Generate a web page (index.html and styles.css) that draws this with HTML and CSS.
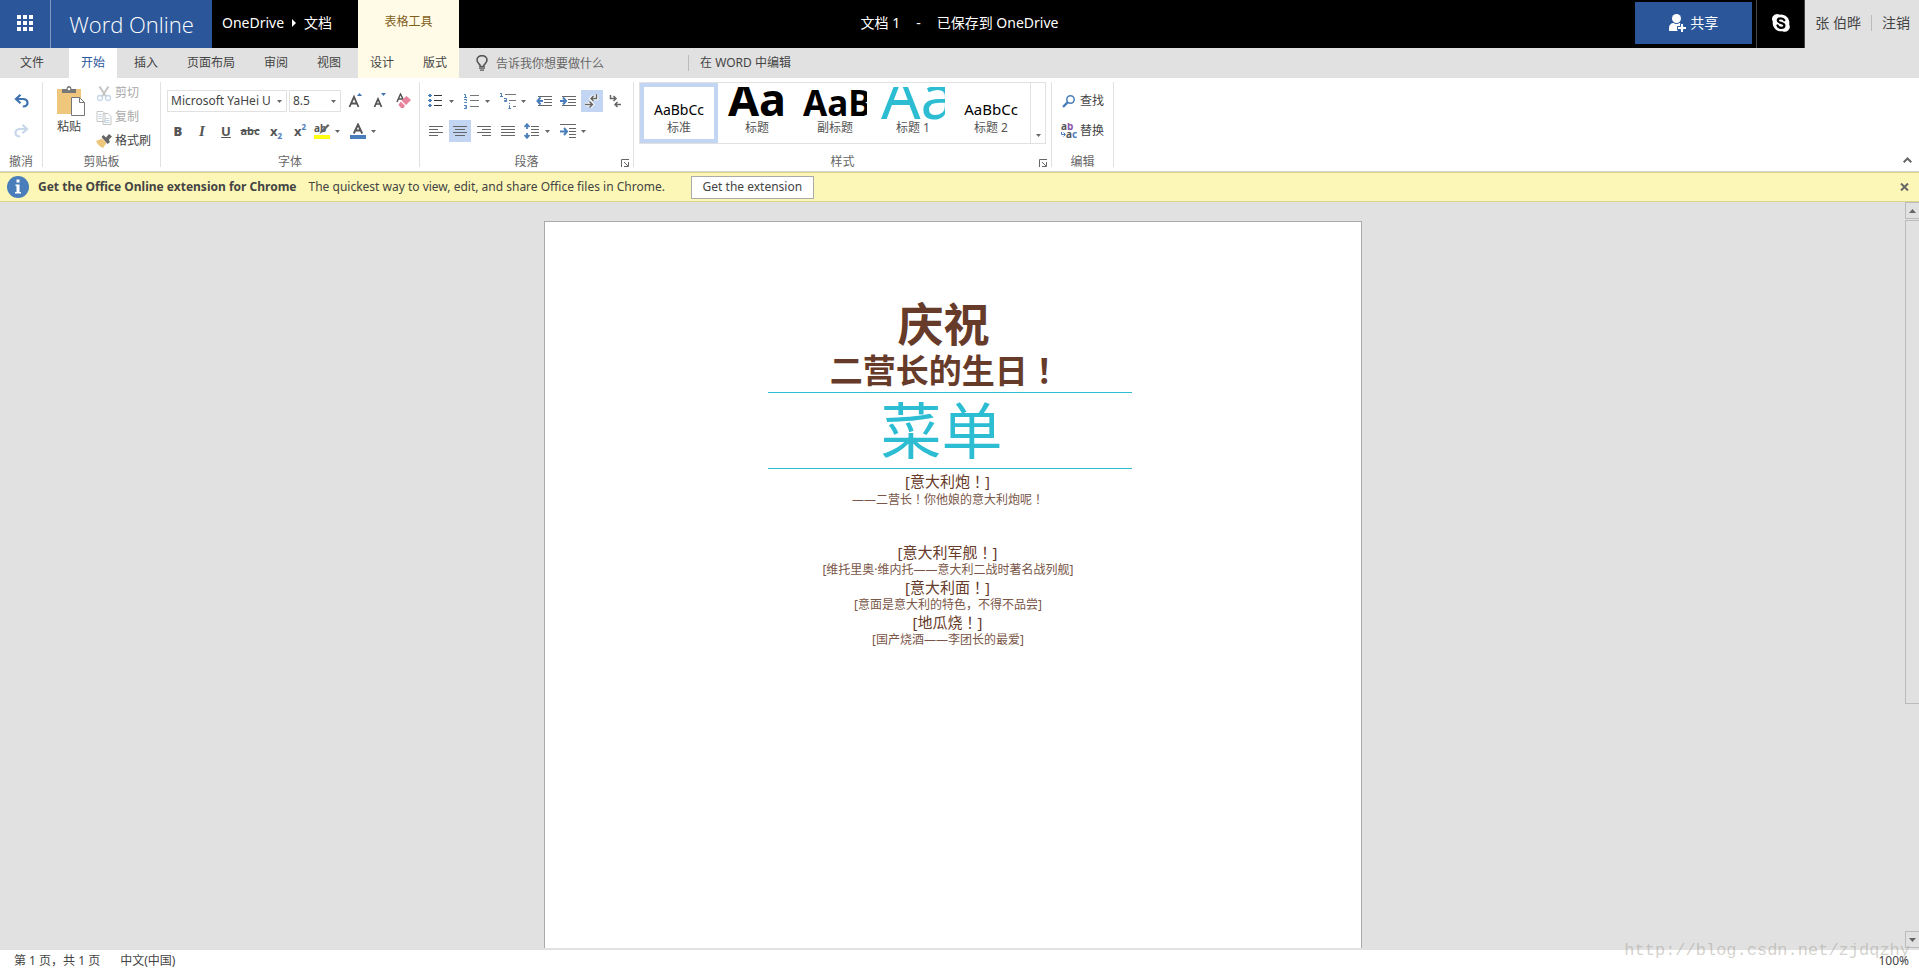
FILE: index.html
```html
<!DOCTYPE html>
<html lang="zh-CN">
<head>
<meta charset="utf-8">
<title>文档 1 - Word Online</title>
<link rel="stylesheet" href="styles.css">
</head>
<body>
<header class="topbar">
  <div class="topbar-left">
    <button class="launcher" aria-label="应用启动器">
      <svg width="16" height="16" viewBox="0 0 16 16" fill="#fff"><path d="M0 0h4v4H0zM6 0h4v4H6zM12 0h4v4h-4zM0 6h4v4H0zM6 6h4v4H6zM12 6h4v4h-4zM0 12h4v4H0zM6 12h4v4H6zM12 12h4v4h-4z"/></svg>
    </button>
    <a class="brand" href="#">Word Online</a>
    <nav class="crumbs">
      <a href="#">OneDrive</a>
      <svg width="4" height="8" viewBox="0 0 4 8" fill="#fff"><path d="M0 0l4 4-4 4z"/></svg>
      <a href="#">文档</a>
    </nav>
    <div class="context-title">表格工具</div>
  </div>
  <div class="doc-title"><span>文档 1</span><span>-</span><span>已保存到 OneDrive</span></div>
  <div class="topbar-right">
    <button class="share">
      <svg width="17" height="18" viewBox="0 0 17 18"><g fill="#fff"><circle cx="7.500" cy="4.500" r="4.500"/><path d="M0 17v-3c0-3 2-5 4.500-5 1.500 1.200 4.500 1.200 6 0 .8.100 1.400.400 2 .9V12H11v2H8.500v3z"/></g><path fill="#fff" stroke="#2b579a" d="M11.500 9.500h3v3H17.500v3h-3v3h-3v-3h-3v-3h3z"/></svg>
      共享
    </button>
    <button class="skype" aria-label="Skype">
      <svg width="18" height="18" viewBox="0 0 18 18"><path fill="#fff" d="M5 0c1 0 1.900.3 2.600.7A8.300 8.300 0 0 1 17.200 10.500 5 5 0 0 1 10.500 17.200 8.300 8.300 0 0 1 .8 7.600 5 5 0 0 1 5 0z"/><path fill="none" stroke="#000" stroke-width="2.200" stroke-linecap="round" d="M12.300 6.200C11.500 4.500 9.800 4.300 8.800 4.300c-1.800 0-3 .9-3 2.200 0 3 6.600 1.700 6.600 4.900 0 1.500-1.500 2.400-3.300 2.400-1.900 0-3-.8-3.600-2.300"/></svg>
    </button>
    <div class="account"><a href="#">张 伯晔</a><a class="signout" href="#">注销</a></div>
  </div>
</header>

<nav class="tabs">
  <button class="tab tab-file">文件</button>
  <button class="tab tab-active">开始</button>
  <button class="tab">插入</button>
  <button class="tab">页面布局</button>
  <button class="tab">审阅</button>
  <button class="tab">视图</button>
  <div class="context-tabs"><button class="tab">设计</button><button class="tab">版式</button></div>
  <label class="tellme">
    <svg width="12" height="16" viewBox="0 0 12 16"><path fill="none" stroke="#555" stroke-width="1.600" d="M4 11.500V10C2.500 8.500 1 7.500 1 5a5 4.400 0 0 1 10 0c0 2.500-1.500 3.500-3 5v1.500z"/><path fill="#555" d="M3 12.500h6v1.200H3zM4 14.500h4v1.200H4z"/></svg>
    <input type="text" placeholder="告诉我你想要做什么" aria-label="告诉我你想要做什么">
  </label>
  <a class="open-word" href="#">在 WORD 中编辑</a>
</nav>

<section class="ribbon">
  <div class="group g-undo">
    <div class="body">
      <button class="tool" aria-label="撤消"><svg width="15" height="14" viewBox="0 0 15 14"><path fill="none" stroke="#3f72ad" stroke-width="2.200" d="M2 5h6.500c3 0 5 1.500 5 3.800 0 2.400-2 3.700-4.700 3.700"/><path fill="none" stroke="#3f72ad" stroke-width="2.200" d="M6.500.8L2 5l4.500 4.200"/></svg></button>
      <button class="tool" aria-label="恢复"><svg width="15" height="14" viewBox="0 0 15 14"><path fill="none" stroke="#c8d8ea" stroke-width="2.200" d="M13 5H6.500c-3 0-5 1.500-5 3.800 0 2.400 2 3.700 4.700 3.700M8.500.8L13 5 8.500 9.200"/></svg></button>
    </div>
    <div class="caption">撤消</div>
  </div>

  <div class="group g-clip">
    <div class="clip-body">
      <button class="paste">
        <svg width="28" height="30" viewBox="0 0 28 30"><path fill="#efc77c" d="M0 3h24v25H0z"/><path fill="#777" d="M5 3h4.500c0-4 5-4 5 0H19v4H5z"/><circle cx="12" cy="3" r="1.300" fill="#fff"/><path fill="#fff" stroke="#777" d="M14.500 11.500h8l5 5v13h-13z"/><path fill="none" stroke="#777" d="M22.500 11.500v5h5"/></svg>
        粘贴
      </button>
      <div class="clip-list">
        <button class="clip off"><svg width="15" height="15" viewBox="0 0 15 15"><path fill="none" stroke="#c6c6c6" stroke-width="2" d="M3 .5l6.500 10M12 .5l-6.500 10"/><circle cx="3.500" cy="12" r="2.500" fill="none" stroke="#c5d6ea" stroke-width="1.300"/><circle cx="11.500" cy="12" r="2.500" fill="none" stroke="#c5d6ea" stroke-width="1.300"/></svg>剪切</button>
        <button class="clip off"><svg width="15" height="15" viewBox="0 0 15 15"><path fill="#fff" stroke="#c6c6c6" d="M.5 1.500h6l2 2v8h-8zM6.500 3.500h5l3 3v8h-8z"/><path stroke="#c5d6ea" d="M2 4.500h3M2 6.500h3M2 8.500h3M8 8.500h5M8 10.500h5M8 12.500h5"/></svg>复制</button>
        <button class="clip"><svg width="16" height="14" viewBox="0 0 16 14"><path fill="#efc77c" d="M0 7l6-2.500L10.500 9 7 14C4 13 1 10 0 7z"/><path fill="#666" d="M5.500 3l2-2 2.500 2.500L13 0l3 2.500-3.200 3.300L14 8l-2.500 2z"/></svg>格式刷</button>
      </div>
    </div>
    <div class="caption">剪贴板</div>
  </div>

  <div class="group g-font">
    <div class="body">
      <div class="row">
        <span class="combo combo-font"><select aria-label="字体"><option>Microsoft YaHei UI</option></select><svg class="arrow" width="5" height="3" viewBox="0 0 5 3"><path d="M0 0h5L2.500 3z"/></svg></span>
        <span class="combo combo-size"><select aria-label="字号"><option>8.5</option></select><svg class="arrow" width="5" height="3" viewBox="0 0 5 3"><path d="M0 0h5L2.500 3z"/></svg></span>
        <button class="tool" aria-label="增大字号"><svg width="14" height="16" viewBox="0 0 14 16"><path fill="none" stroke="#555" stroke-width="1.800" d="M1.500 14L6 3.800 10.500 14M3 10.500h6"/><path fill="#3f72ad" d="M9 3l2.500-3L14 3z"/></svg></button>
        <button class="tool" aria-label="减小字号"><svg width="14" height="16" viewBox="0 0 14 16"><path fill="none" stroke="#555" stroke-width="1.700" d="M2.500 14L6 5.800 9.500 14M4 11h4"/><path fill="#3f72ad" d="M9 0h5l-2.500 3z"/></svg></button>
        <button class="tool" aria-label="清除格式"><svg width="15" height="16" viewBox="0 0 15 16"><path fill="none" stroke="#555" stroke-width="1.500" d="M1 9l3.500-8L8 8M2 6h5"/><path fill="#e8839b" d="M10.500 3L15 7l-5 5-4.500-4.500zM4.700 8.500L9 12.700 7.500 15 5 15 2.500 12z"/></svg></button>
      </div>
      <div class="row">
        <button class="tool letter"><b>B</b></button>
        <button class="tool letter"><em>I</em></button>
        <button class="tool letter"><u>U</u></button>
        <button class="tool strike"><s>abc</s></button>
        <button class="tool letter script" aria-label="下标">x<small class="sub">2</small></button>
        <button class="tool letter script" aria-label="上标">x<small class="sup">2</small></button>
        <button class="tool split" aria-label="突出显示"><svg width="16" height="16" viewBox="0 0 16 16"><path fill="#ff1" d="M0 12h16v4H0z"/><text class="mark-ab" x="0" y="9">ab</text><path fill="#666" d="M14 1l1.500 1.500L9 9l-3.500 2L7 7.500z"/></svg><svg class="arrow" width="5" height="3" viewBox="0 0 5 3"><path d="M0 0h5L2.500 3z"/></svg></button>
        <button class="tool split" aria-label="字体颜色"><svg width="16" height="16" viewBox="0 0 16 16"><path fill="#4a7ebb" d="M0 12h16v4H0z"/><path fill="none" stroke="#555" stroke-width="1.900" d="M3.800 10.500L8 1.500l4.200 9M5 7.500h6"/></svg><svg class="arrow" width="5" height="3" viewBox="0 0 5 3"><path d="M0 0h5L2.500 3z"/></svg></button>
      </div>
    </div>
    <div class="caption">字体</div>
  </div>

  <div class="group g-para">
    <div class="body">
      <div class="row">
        <button class="tool split" aria-label="项目符号"><svg width="16" height="14" viewBox="0 0 16 14"><path fill="#4a7ebb" d="M1 0h2v1h1v1H3v1H1V2H0V1h1zM1 5h2v1h1v1H3v1H1V7H0V6h1zM1 10h2v1h1v1H3v1H1v-1H0v-1h1z"/><path stroke="#333" d="M6 1.500h8M6 6.500h8M6 11.500h8"/></svg><svg class="arrow" width="5" height="3" viewBox="0 0 5 3"><path d="M0 0h5L2.500 3z"/></svg></button>
        <button class="tool split" aria-label="编号"><svg width="16" height="16" viewBox="0 0 16 16"><path fill="none" stroke="#4a7ebb" d="M0 1.500h1.500V4M0 4.500h3M0 6.500h2.500V8M.5 9v.5H3M0 12.500h2.500v3H0M1 14h2"/><path stroke="#777" d="M6 2.500h9M6 7.500h9M6 13.500h9"/></svg><svg class="arrow" width="5" height="3" viewBox="0 0 5 3"><path d="M0 0h5L2.500 3z"/></svg></button>
        <button class="tool split" aria-label="多级列表"><svg width="16" height="16" viewBox="0 0 16 16"><path fill="none" stroke="#4a7ebb" d="M0 .5h1.500V3M0 3.500h3M4 5.500h2.500v3H4.500V7.500H6M9.500 10v1M9 12.500h.5V15M8.500 15.500h2.500"/><path stroke="#777" d="M5 1.500h11M9 7.500h7M13 13.500h3"/></svg><svg class="arrow" width="5" height="3" viewBox="0 0 5 3"><path d="M0 0h5L2.500 3z"/></svg></button>
        <button class="tool" aria-label="减少缩进"><svg width="16" height="13" viewBox="0 0 16 13"><path stroke="#666" d="M2 1.500h14M8 4.500h8M8 7.500h8M2 10.500h14"/><path fill="none" stroke="#4a7ebb" stroke-width="2" d="M4.500 2.500L1.500 6l3 3.500M1 6h6"/></svg></button>
        <button class="tool" aria-label="增加缩进"><svg width="16" height="13" viewBox="0 0 16 13"><path stroke="#666" d="M2 1.500h14M8 4.500h8M8 7.500h8M2 10.500h14"/><path fill="none" stroke="#4a7ebb" stroke-width="2" d="M3 2.500L6 6 3 9.500M0 6h6.500"/></svg></button>
        <button class="tool on" aria-label="从左到右"><svg width="14" height="14" viewBox="0 0 14 14"><path fill="none" stroke="#fff" stroke-width="3.500" d="M11.500 0v4.500H6M8.500 2L6 4.500 8.500 7M0 10.500h7M4.500 7.500l3 3-3 3"/><path fill="none" stroke="#666" stroke-width="1.500" d="M11.500 0v4.500H6M8.500 2L6 4.500 8.500 7M0 10.500h7M4.500 7.500l3 3-3 3"/></svg></button>
        <button class="tool" aria-label="从右到左"><svg width="14" height="14" viewBox="0 0 14 14"><path fill="none" stroke="#666" stroke-width="1.500" d="M1.500 1v3.500H7M4.500 2L7 4.500 4.500 7M12 10.500H6M8.500 8L6 10.500 8.500 13"/></svg></button>
      </div>
      <div class="row">
        <button class="tool" aria-label="左对齐"><svg width="14" height="12" viewBox="0 0 14 12"><path stroke="#666" d="M0 1.500h14M0 4.500h9M0 7.500h14M0 10.500h9"/></svg></button>
        <button class="tool on" aria-label="居中"><svg width="14" height="12" viewBox="0 0 14 12"><path stroke="#666" d="M0 1.500h14M2 4.500h10M0 7.500h14M2 10.500h10"/></svg></button>
        <button class="tool" aria-label="右对齐"><svg width="14" height="12" viewBox="0 0 14 12"><path stroke="#666" d="M0 1.500h14M5 4.500h9M0 7.500h14M5 10.500h9"/></svg></button>
        <button class="tool" aria-label="两端对齐"><svg width="14" height="12" viewBox="0 0 14 12"><path stroke="#666" d="M0 1.500h14M0 4.500h14M0 7.500h14M0 10.500h14"/></svg></button>
        <button class="tool split" aria-label="行距"><svg width="16" height="16" viewBox="0 0 16 16"><path fill="none" stroke="#4a7ebb" stroke-width="1.800" d="M3 1v5M.5 4L3 1.200 5.500 4M3 10v5M.5 12L3 14.800 5.500 12"/><path stroke="#666" d="M7 3.500h8M7 6.500h8M7 9.500h8M7 12.500h8"/></svg><svg class="arrow" width="5" height="3" viewBox="0 0 5 3"><path d="M0 0h5L2.500 3z"/></svg></button>
        <button class="tool split" aria-label="特殊缩进"><svg width="16" height="14" viewBox="0 0 16 14"><path stroke="#666" d="M0 .5h16M9 4.500h7M9 7.500h7M9 10.500h7M9 13.500h7"/><path fill="none" stroke="#4a7ebb" stroke-width="2" d="M4 4L7 7.500 4 11M0 7.500h7"/></svg><svg class="arrow" width="5" height="3" viewBox="0 0 5 3"><path d="M0 0h5L2.500 3z"/></svg></button>
      </div>
    </div>
    <div class="caption">段落</div>
    <button class="dialog" aria-label="段落设置"><svg width="8" height="8" viewBox="0 0 8 8"><path fill="none" stroke="#666" d="M.5 8V.5H8M3 3l4 4M7.500 3v4.500H3"/></svg></button>
  </div>

  <div class="group g-styles">
    <div class="gallery">
      <button class="style style-on"><span class="preview p-normal">AaBbCc</span>标准</button>
      <button class="style"><span class="preview p-title">Aa</span>标题</button>
      <button class="style"><span class="preview p-subtitle">AaB</span>副标题</button>
      <button class="style"><span class="preview p-h1">Aa</span>标题 1</button>
      <button class="style"><span class="preview p-h2">AaBbCc</span>标题 2</button>
      <button class="more" aria-label="更多样式"><svg class="arrow" width="5" height="3" viewBox="0 0 5 3"><path d="M0 0h5L2.500 3z"/></svg></button>
    </div>
    <div class="caption">样式</div>
    <button class="dialog" aria-label="样式设置"><svg width="8" height="8" viewBox="0 0 8 8"><path fill="none" stroke="#666" d="M.5 8V.5H8M3 3l4 4M7.500 3v4.500H3"/></svg></button>
  </div>

  <div class="group g-edit">
    <div class="body">
      <button class="edit-tool"><svg width="16" height="13" viewBox="0 0 16 13"><circle cx="9.500" cy="4.500" r="3.700" fill="none" stroke="#4a7ebb" stroke-width="1.500"/><path stroke="#4a7ebb" stroke-width="2.400" d="M6.800 7.200L2 12"/></svg>查找</button>
      <button class="edit-tool"><svg width="16" height="16" viewBox="0 0 16 16"><text class="rep" x="0" y="7">a<tspan fill="#8a55a8">b</tspan></text><text class="rep" x="5" y="15">a<tspan fill="#4a7ebb">c</tspan></text><path fill="none" stroke="#4a7ebb" d="M.5 9v2.500H4M2.500 9.500l2 2-2 2"/></svg>替换</button>
    </div>
    <div class="caption">编辑</div>
  </div>
  <button class="collapse" aria-label="折叠功能区"><svg width="9" height="6" viewBox="0 0 9 6"><path fill="none" stroke="#666" stroke-width="2" d="M.7 5.300L4.500 1.500l3.800 3.800"/></svg></button>
</section>

<aside class="notice">
  <svg width="22" height="22" viewBox="0 0 22 22"><circle cx="11" cy="11" r="11" fill="#4a7ebb"/><path fill="#fff" d="M9.500 3.500h3v3h-3zM8.500 8.500h4V16H14v1.500H8V16h1.500v-6h-1z"/></svg>
  <b>Get the Office Online extension for Chrome</b>
  <span>The quickest way to view, edit, and share Office files in Chrome.</span>
  <button class="get">Get the extension</button>
  <button class="close" aria-label="关闭"><svg width="9" height="8" viewBox="0 0 9 8"><path fill="none" stroke="#666" stroke-width="2" d="M1 .5l7 7M8 .5l-7 7"/></svg></button>
</aside>

<main class="workspace">
  <div class="canvas">
    <article class="page">
      <h1 class="celebrate">庆祝&nbsp;</h1>
      <h2 class="birthday">二营长的生日<span class="mid" lang="zh-TW">！</span>&nbsp;</h2>
      <h2 class="menu-title">菜单&nbsp;</h2>
      <div class="menu">
        <h3>[意大利炮<span class="mid" lang="zh-TW">！</span>]&nbsp;</h3>
        <p>——二营长<span class="mid" lang="zh-TW">！</span>你他娘的意大利炮呢<span class="mid" lang="zh-TW">！</span>&nbsp;</p>
        <h3 class="spaced">[意大利军舰<span class="mid" lang="zh-TW">！</span>]&nbsp;</h3>
        <p>[维托里奥·维内托——意大利二战时著名战列舰]&nbsp;</p>
        <h3>[意大利面<span class="mid" lang="zh-TW">！</span>]&nbsp;</h3>
        <p>[意面是意大利的特色，不得不品尝]&nbsp;</p>
        <h3>[地瓜烧<span class="mid" lang="zh-TW">！</span>]&nbsp;</h3>
        <p>[国产烧酒——李团长的最爱]&nbsp;</p>
      </div>
    </article>
  </div>
  <div class="scrollbar">
    <button class="scroll-btn" aria-label="向上"><svg class="arrow" width="7" height="4" viewBox="0 0 7 4"><path d="M0 4h7L3.500 0z"/></svg></button>
    <div class="track"><div class="thumb"></div></div>
    <button class="scroll-btn" aria-label="向下"><svg class="arrow" width="7" height="4" viewBox="0 0 7 4"><path d="M0 0h7L3.500 4z"/></svg></button>
  </div>
</main>

<footer class="status">
  <span>第 1 页，共 1 页</span><span>中文(中国)</span><span class="zoom">100%</span>
</footer>
<div class="watermark">http://blog.csdn.net/zjdqzhy</div>
</body>
</html>
```
FILE: styles.css
```css
* { box-sizing: border-box; }
html, body { height: 100%; }
body {
  margin: 0;
  display: flex;
  flex-direction: column;
  overflow: hidden;
  position: relative;
  background: #fff;
  color: #444;
  font: 12px/16px "Noto Sans", "Noto Sans CJK SC", sans-serif;
}
button, input, select { font: inherit; color: inherit; background: none; border: 0; padding: 0; margin: 0; border-radius: 0; }
a { color: inherit; text-decoration: none; }
h1, h2, h3, p { margin: 0; }
svg { flex: none; display: block; }
.arrow { fill: #666; }

.topbar {
  display: grid;
  grid-template-columns: 1fr auto 1fr;
  height: 48px;
  flex: none;
  background: #000;
  color: #fff;
  font-size: 14px;
}
.topbar-left, .topbar-right { display: flex; align-items: stretch; }
.topbar-right { justify-content: flex-end; }
.launcher { width: 51px; display: flex; align-items: center; justify-content: center; background: #2b579a; border-right: 1px solid #7f9ac2; padding-bottom: 2px; }
.brand { width: 161px; display: flex; align-items: center; justify-content: center; padding-bottom: 1px; background: #2b579a; font: 300 22px/30px "Open Sans", "Noto Sans", sans-serif; }
.crumbs { width: 146px; padding: 0 0 2px 10px; display: flex; align-items: center; gap: 8px; }
.context-title { width: 101px; display: flex; align-items: center; justify-content: center; padding-bottom: 5px; background: #fffbe6; color: #7f5f1a; font-size: 12px; }
.doc-title { display: flex; align-items: center; gap: 16px; padding-bottom: 2px; }
.share { width: 117px; margin: 2px 4px 4px 0; display: flex; align-items: center; justify-content: center; gap: 4px; background: #2b579a; }
.skype { width: 49px; display: flex; align-items: center; justify-content: center; padding-bottom: 2px; border: solid #444; border-width: 0 1px; }
.account { display: flex; align-items: center; padding: 0 9px 2px 10px; background: #e1e1e1; color: #444; }
.signout { margin-left: 10px; padding-left: 10px; border-left: 1px solid #bbb; }

.tabs { display: flex; height: 30px; flex: none; background: #e1e1e1; align-items: stretch; }
.tab { padding: 0 12px; margin-right: 5px; }
.tab-file { width: 64px; text-align: center; }
.tab-active { background: #fff; color: #2b579a; }
.context-tabs { display: flex; justify-content: space-between; width: 101px; background: #fffbe6; }
.context-tabs .tab { margin: 0; }
.tellme { display: flex; align-items: center; gap: 8px; margin-left: 17px; width: 212px; }
.tellme input { width: 180px; height: 24px; outline: 0; }
.tellme input::placeholder { color: #666; opacity: 1; }
.open-word { align-self: center; border-left: 1px solid #bbb; padding-left: 11px; }

.ribbon { display: flex; flex: none; height: 94px; padding: 4px 0; background: #fff; border-bottom: 1px solid #d5d5d5; }
.group { position: relative; display: flex; flex-direction: column; justify-content: space-between; border-right: 1px solid #e1e1e1; }
.caption { text-align: center; color: #666; line-height: 10px; }
.body { display: flex; flex-direction: column; gap: 8px; padding-top: 8px; }
.row { display: flex; gap: 2px; height: 22px; }
.tool { display: flex; align-items: center; justify-content: center; width: 22px; height: 22px; }
.tool.on { background: #c2d5f2; }
.split { width: 34px; justify-content: flex-start; gap: 5px; padding-left: 3px; }
.letter { font-weight: 700; font-size: 13px; color: #555; }
.letter em { font-family: "Liberation Serif", serif; font-size: 15px; }
.strike { font-weight: 700; font-size: 11px; color: #555; }
.letter small { color: #4a7ebb; font-size: 8px; line-height: 8px; }
.script { justify-content: flex-end; padding-right: 3px; }
.sub { padding-top: 10px; }
.sup { padding-bottom: 8px; }
.mark-ab { font: 700 10px "Noto Sans", sans-serif; fill: #555; }
.rep { font: 700 10px "Noto Sans", sans-serif; fill: #555; }

.g-undo { width: 43px; }
.g-undo .body { align-items: center; }
.g-clip { width: 118px; }
.clip-body { display: flex; gap: 11px; padding: 4px 0 0 14px; }
.paste { display: flex; flex-direction: column; align-items: flex-start; gap: 3px; align-self: flex-start; }
.clip-list { display: flex; flex-direction: column; gap: 8px; margin-top: -1px; }
.clip { display: flex; align-items: center; gap: 3px; height: 16px; }
.clip svg { width: 16px; }
.clip.off { color: #aaa; }
.g-font { width: 259px; padding-left: 6px; }
.g-font .caption { padding-right: 6px; }
.combo { position: relative; display: flex; border: 1px solid #e1e1e1; }
.combo select { appearance: none; width: 100%; padding: 0 16px 0 3px; outline: 0; color: #444; }
.combo .arrow { position: absolute; right: 4px; top: 9px; pointer-events: none; }
.combo-font { width: 120px; }
.combo-size { width: 52px; margin-right: 1px; }
.g-para { width: 214px; padding-left: 5px; }
.g-para .caption { padding-right: 5px; }
.dialog { position: absolute; right: 4px; bottom: 0; }
.g-styles { width: 418px; padding: 0 5px; }
.gallery { display: flex; border: 1px solid #e1e1e1; height: 62px; }
.style { width: 78px; display: flex; flex-direction: column; align-items: center; color: #555; border: 4px solid transparent; }
.style-on { border-color: #c2d5f2; }
.preview { width: 64px; height: 33px; overflow: hidden; white-space: nowrap; text-align: center; color: #000; }
.p-normal { font-size: 14px; line-height: 45px; }
.p-title { font-size: 45px; line-height: 24px; font-weight: 700; }
.p-subtitle { font-size: 35px; line-height: 31px; font-weight: 700; }
.p-h1 { font-size: 62px; line-height: 16px; color: #2dbdd3; }
.p-h2 { font-size: 15px; line-height: 44px; }
.more { flex: 1; border-left: 1px solid #e1e1e1; display: flex; align-items: flex-end; justify-content: center; padding-bottom: 6px; }
.g-edit { width: 62px; padding-left: 9px; }
.g-edit .caption { padding-right: 9px; }
.edit-tool { display: flex; align-items: center; gap: 3px; height: 22px; }
.collapse { margin-left: auto; margin-right: 7px; align-self: flex-end; padding-bottom: 4px; }

.notice { display: flex; align-items: center; flex: none; height: 30px; padding: 0 10px 0 7px; background: #fcf7b6; border: solid #d9d68a; border-width: 1px 0; }
.notice b { margin-left: 9px; }
.notice span { margin-left: 12px; }
.get { margin-left: 26px; width: 123px; height: 23px; background: #fff; border: 1px solid #aaa; }
.close { margin-left: auto; }

.workspace { flex: 1; min-height: 0; display: flex; background: #e1e1e1; padding-bottom: 2px; }
.canvas { flex: 1; display: flex; justify-content: center; padding-top: 19px; overflow: hidden; }
.page { width: 818px; background: #fff; border: 1px solid #aaa; border-bottom: 0; padding: 76px 229px 0 223px; text-align: center; color: #673b2a; white-space: nowrap; }
.celebrate { font-size: 46px; line-height: 50px; }
.birthday { font-size: 33px; line-height: 42px; }
.menu-title { border: solid #2dbdd3; border-width: 1px 0; font-size: 61px; line-height: 75px; font-weight: 400; color: #2dbdd3; }
.menu { padding-top: 3px; }
.menu h3 { font-size: 15px; line-height: 18px; font-weight: 400; }
.menu p { font-size: 12px; line-height: 17px; color: #7a5648; }
.menu .spaced { margin-top: 35px; }
.mid { font-family: "Noto Sans CJK TC", sans-serif; }

.scrollbar { width: 14px; display: flex; flex-direction: column; }
.scroll-btn { height: 17px; border: 1px solid #bbb; border-right: 0; display: flex; align-items: center; justify-content: center; }
.track { flex: 1; }
.thumb { height: 68%; border: 1px solid #bbb; border-right: 0; margin-top: 1px; }

.status { display: flex; gap: 20px; height: 21px; flex: none; align-items: center; padding: 0 10px 0 14px; background: #fff; }
.zoom { margin-left: auto; }
.watermark { position: absolute; right: 9px; bottom: 10px; font: 17px/20px "Liberation Mono", monospace; color: rgba(160, 155, 145, .45); pointer-events: none; }
```
